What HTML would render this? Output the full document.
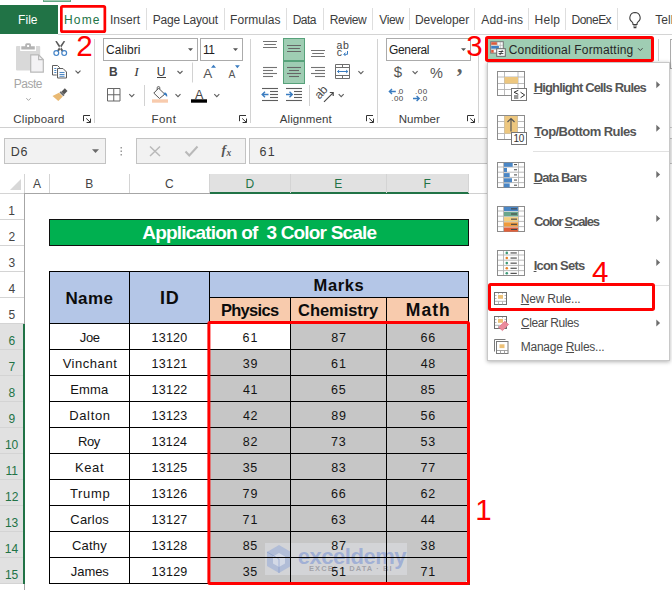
<!DOCTYPE html>
<html lang="en">
<head>
<meta charset="utf-8">
<title>Excel - Conditional Formatting - New Rule</title>
<style>
html,body{margin:0;padding:0;}
body{width:672px;height:590px;overflow:hidden;background:#fff;position:relative;
  font-family:"Liberation Sans",sans-serif;font-size:12px;color:#444;}
.a{position:absolute;display:block;}
.t{position:absolute;white-space:nowrap;line-height:1;}
svg{overflow:visible;}
</style>
</head>
<body>

<!-- ======= TAB ROW ======= -->
<div class="a" style="left:0px;top:0px;width:672px;height:35px;background:#ffffff;"></div>
<div class="a" style="left:43px;top:0px;width:28px;height:2px;background:#9fcdb3;border:1px solid #63a884;box-sizing:border-box;border-top:0;"></div>
<div class="a" style="left:0px;top:5px;width:58px;height:29px;background:#217346;"></div>
<div class="a" style="left:58px;top:34px;width:614px;height:1px;background:#d4d4d4;"></div>
<span class="t" style="left:18.02px;top:14px;font-size:12px;letter-spacing:0.060px;color:#ffffff;">File</span>
<span class="t" style="left:64.02px;top:14px;font-size:12px;letter-spacing:1.169px;color:#217346;">Home</span>
<span class="t" style="left:109.90px;top:14px;font-size:12px;letter-spacing:0.035px;color:#3c3c3c;">Insert</span>
<span class="t" style="left:152.72px;top:14px;font-size:12px;letter-spacing:-0.202px;color:#3c3c3c;">Page Layout</span>
<span class="t" style="left:230.02px;top:14px;font-size:12px;letter-spacing:0.057px;color:#3c3c3c;">Formulas</span>
<span class="t" style="left:292.72px;top:14px;font-size:12px;letter-spacing:-0.524px;color:#3c3c3c;">Data</span>
<span class="t" style="left:329.72px;top:14px;font-size:12px;letter-spacing:-0.480px;color:#3c3c3c;">Review</span>
<span class="t" style="left:379.25px;top:14px;font-size:12px;letter-spacing:-0.359px;color:#3c3c3c;">View</span>
<span class="t" style="left:415.02px;top:14px;font-size:12px;letter-spacing:-0.065px;color:#3c3c3c;">Developer</span>
<span class="t" style="left:481.28px;top:14px;font-size:12px;letter-spacing:0.194px;color:#3c3c3c;">Add-ins</span>
<span class="t" style="left:534.52px;top:14px;font-size:12px;letter-spacing:0.264px;color:#3c3c3c;">Help</span>
<span class="t" style="left:571.52px;top:14px;font-size:12px;letter-spacing:-0.518px;color:#3c3c3c;">DoneEx</span>
<span class="t" style="left:655.24px;top:14px;font-size:12px;letter-spacing:0.019px;color:#3c3c3c;">Tell</span>
<div class="a" style="left:146px;top:8px;width:1px;height:22px;background:#dedede;"></div>
<div class="a" style="left:224px;top:8px;width:1px;height:22px;background:#dedede;"></div>
<div class="a" style="left:286px;top:8px;width:1px;height:22px;background:#dedede;"></div>
<div class="a" style="left:323px;top:8px;width:1px;height:22px;background:#dedede;"></div>
<div class="a" style="left:372px;top:8px;width:1px;height:22px;background:#dedede;"></div>
<div class="a" style="left:409px;top:8px;width:1px;height:22px;background:#dedede;"></div>
<div class="a" style="left:474px;top:8px;width:1px;height:22px;background:#dedede;"></div>
<div class="a" style="left:528px;top:8px;width:1px;height:22px;background:#dedede;"></div>
<div class="a" style="left:565px;top:8px;width:1px;height:22px;background:#dedede;"></div>
<div class="a" style="left:617px;top:8px;width:1px;height:22px;background:#dedede;"></div>
<svg class="a" style="left:626px;top:10px;" width="18" height="20" viewBox="0 0 18 20"><path d="M9 2.5a5.2 5.2 0 0 0-3 9.4c.7.6 1 1.300 1 2.100v.5h4v-.5c0-.8.3-1.500 1-2.100a5.200 5.200 0 0 0-3-9.400z" fill="none" stroke="#3c3c3c" stroke-width="1.100"/><path d="M7.200 16h3.600M7.600 17.600h2.800" stroke="#3c3c3c" stroke-width="1.100" fill="none"/></svg>
<!-- ======= RIBBON BODY ======= -->
<div class="a" style="left:0px;top:35px;width:672px;height:93px;background:#ffffff;"></div>
<div class="a" style="left:0px;top:127px;width:672px;height:1px;background:#d0d0d0;"></div>
<div class="a" style="left:94px;top:39px;width:1px;height:84px;background:#d2d2d2;"></div>
<div class="a" style="left:250px;top:39px;width:1px;height:84px;background:#d2d2d2;"></div>
<div class="a" style="left:377px;top:39px;width:1px;height:84px;background:#d2d2d2;"></div>
<div class="a" style="left:478px;top:39px;width:1px;height:84px;background:#d2d2d2;"></div>
<span class="t" style="left:13.33px;top:114px;font-size:11.5px;letter-spacing:0.224px;color:#3c3c3c;">Clipboard</span>
<span class="t" style="left:151.56px;top:114px;font-size:11.5px;letter-spacing:0.437px;color:#3c3c3c;">Font</span>
<span class="t" style="left:279.68px;top:114px;font-size:11.5px;letter-spacing:0.120px;color:#3c3c3c;">Alignment</span>
<span class="t" style="left:398.76px;top:114px;font-size:11.5px;letter-spacing:0.044px;color:#3c3c3c;">Number</span>
<div class="a" style="left:103px;top:38px;width:95px;height:23px;background:#ffffff;border:1px solid #ababab;box-sizing:border-box;"></div>
<div class="a" style="left:200px;top:38px;width:43px;height:23px;background:#ffffff;border:1px solid #ababab;box-sizing:border-box;"></div>
<div class="a" style="left:386px;top:38px;width:85px;height:23px;background:#ffffff;border:1px solid #ababab;box-sizing:border-box;"></div>
<span class="t" style="left:106.10px;top:44px;font-size:12px;letter-spacing:0.066px;color:#1e1e1e;">Calibri</span>
<span class="t" style="left:202.89px;top:44px;font-size:12px;letter-spacing:-0.300px;color:#1e1e1e;">11</span>
<span class="t" style="left:389.10px;top:44px;font-size:12px;letter-spacing:-0.382px;color:#1e1e1e;">General</span>
<span class="t" style="left:13.82px;top:78px;font-size:12px;letter-spacing:-0.493px;color:#a6a6a6;">Paste</span>
<span class="t" style="left:109.11px;top:66px;font-size:12px;font-weight:bold;color:#444;">B</span>
<span class="t" style="left:134.25px;top:65px;font-size:13.5px;font-style:italic;font-family:'Liberation Serif',serif;color:#3a3a3a;">I</span>
<span class="t" style="left:156.78px;top:66px;font-size:12px;color:#333;">U</span>
<div class="a" style="left:157px;top:77px;width:9px;height:1px;background:#444;"></div>
<span class="t" style="left:203.27px;top:67px;font-size:13.5px;color:#555;">A</span>
<span class="t" style="left:228.48px;top:70px;font-size:10.3px;color:#555;">A</span>
<span class="t" style="left:194.88px;top:89px;font-size:12.5px;color:#444;">A</span>
<span class="t" style="left:393.65px;top:64px;font-size:15px;color:#555;">$</span>
<span class="t" style="left:429.99px;top:66px;font-size:14.5px;color:#555;">%</span>
<span class="t" style="left:456.70px;top:53px;font-size:23px;font-weight:bold;font-family:'Liberation Serif',serif;color:#606060;">,</span>
<span class="t" style="left:336.46px;top:40px;font-size:10.5px;letter-spacing:0.796px;color:#444;">ab</span>
<span class="t" style="left:336.76px;top:47px;font-size:10.5px;color:#444;">c</span>
<span class="t" style="left:397.57px;top:88px;font-size:8px;letter-spacing:-0.940px;color:#444;">.0</span>
<span class="t" style="left:391.27px;top:95px;font-size:8px;letter-spacing:0.456px;color:#444;">.00</span>
<span class="t" style="left:415.07px;top:88px;font-size:8px;letter-spacing:0.506px;color:#444;">.00</span>
<span class="t" style="left:420.17px;top:95px;font-size:8px;letter-spacing:0.360px;color:#444;">.0</span>
<span class="t" style="left:321px;top:88.5px;font-size:12px;color:#4a4a4a;transform:rotate(-47deg);transform-origin:0 100%;letter-spacing:-0.4px;">ab</span>
<div class="a" style="left:283px;top:38px;width:22px;height:23px;background:#9fcdb3;border:1px solid #57a27a;box-sizing:border-box;"></div>
<div class="a" style="left:283px;top:61px;width:22px;height:23px;background:#9fcdb3;border:1px solid #57a27a;box-sizing:border-box;"></div>
<div class="a" style="left:486px;top:37px;width:167px;height:24px;background:#9fcdb3;"></div>
<span class="t" style="left:508.70px;top:44px;font-size:12px;letter-spacing:0.183px;color:#262626;">Conditional Formatting</span>
<div class="a" style="left:658px;top:39px;width:1px;height:22px;background:#cfcfcf;"></div>
<div class="a" style="left:670px;top:39px;width:3px;height:30px;background:#fdfdfd;border:1px solid #ababab;box-sizing:border-box;"></div>
<svg class="a" style="left:0px;top:0px;" width="672" height="128" viewBox="0 0 672 128"><path d="M17 46h22.200a1 1 0 0 1 1 1v22.600a1 1 0 0 1-1 1h-22.200a1 1 0 0 1-1-1v-22.600a1 1 0 0 1 1-1z" fill="#d9d9d9"/><rect x="20.200" y="46" width="15.800" height="5" fill="#ffffff"/><path d="M21.300 46.300h3.900v-1.600a1.500 1.500 0 0 1 1.500-1.500h2.800a1.500 1.500 0 0 1 1.500 1.500v1.600h3.800v3.300h-13.500z" fill="#b4b4b4"/><rect x="27.100" y="45" width="2" height="2" fill="#ffffff"/><path d="M30.700 54.900h7.900l4.700 4.700v12.600h-12.600z" fill="#f3f2f4" stroke="#b9b9b9" stroke-width="1.200"/><path d="M38.600 54.900v4.700h4.700" fill="none" stroke="#b9b9b9" stroke-width="1.200"/><path d="M26.3 98.2l2.2 2.2l2.2 -2.2" fill="none" stroke="#a6a6a6" stroke-width="1"/><path d="M55.200 41.200l1.600-.3 6.600 9.600-1.600 1.200zM65.200 41.200l-1.600-.3-6.600 9.600 1.600 1.200z" fill="#5a5a5a"/><circle cx="56.300" cy="53.100" r="2.400" fill="none" stroke="#4484c8" stroke-width="1.200"/><circle cx="64.200" cy="53.100" r="2.400" fill="none" stroke="#4484c8" stroke-width="1.200"/><path d="M52.500 65.500h5l2 2v1.200M52.500 65.500v9.500h4.200" fill="none" stroke="#5e5e5e" stroke-width="1"/><path d="M57.500 68.500h5.500l3.500 3.500v6h-9z" fill="#fafafa" stroke="#5e5e5e" stroke-width="1"/><path d="M59.500 72.500h5M59.500 74.500h5M59.500 76.300h5M54.300 68.500h2M54.300 70.500h2M54.300 72.500h2" stroke="#3a7cc0" stroke-width="0.900"/><path d="M75.5 70.6l2.5 2.5l2.5 -2.5" fill="none" stroke="#5e5e5e" stroke-width="1.1"/><path d="M64.800 88.300l2.700 2.700-3.400 3.400-2.700-2.700z" fill="#555"/><path d="M60.800 91.200l3.800 3.800-1.300 1.300-3.800-3.800z" fill="#6b6b6b"/><path d="M59 92.800l3.800 3.800-4.500 4.300-5.800-5z" fill="#e9b973"/><path d="M83.5 121.2V115.5H90" fill="none" stroke="#333" stroke-width="1"/><path d="M86.2 118.4L90.3 122.3M90.5 118.6V122.5H86.6" fill="none" stroke="#333" stroke-width="1"/><path d="M239.5 121.2V115.5H246" fill="none" stroke="#333" stroke-width="1"/><path d="M242.2 118.4L246.3 122.3M246.5 118.6V122.5H242.6" fill="none" stroke="#333" stroke-width="1"/><path d="M366.5 121.2V115.5H373" fill="none" stroke="#333" stroke-width="1"/><path d="M369.2 118.4L373.3 122.3M373.5 118.6V122.5H369.6" fill="none" stroke="#333" stroke-width="1"/><path d="M467.5 121.2V115.5H474" fill="none" stroke="#333" stroke-width="1"/><path d="M470.2 118.4L474.3 122.3M474.5 118.6V122.5H470.6" fill="none" stroke="#333" stroke-width="1"/><path d="M188 48.3h5l-2.5 2.8z" fill="#555"/><path d="M233 48.3h5l-2.5 2.8z" fill="#555"/><path d="M461 48.3h5l-2.5 2.8z" fill="#555"/><path d="M177.5 71l2.5 2.5l2.5 -2.5" fill="none" stroke="#5e5e5e" stroke-width="1.1"/><path d="M192.500 62.500v20" stroke="#d2d2d2" stroke-width="1"/><path d="M211 67.800l2.500-3 2.500 3z" fill="#3a7cc0"/><path d="M235 65.300h4.800l-2.400 2.900z" fill="#3a7cc0"/><path d="M107.500 88.500h12.500v12.500h-12.500zM113.750 88.500v12.500M107.500 94.750h12.500" fill="none" stroke="#666" stroke-width="1"/><path d="M129.3 94.2l2.5 2.5l2.5 -2.5" fill="none" stroke="#5e5e5e" stroke-width="1.1"/><path d="M144.500 85v21" stroke="#d2d2d2" stroke-width="1"/><path d="M158.600 88.200l6.200 6-5.300 4.300-5.700-5.400z" fill="#fafafa" stroke="#555" stroke-width="1"/><path d="M157.200 90v-2.200a1.300 1.300 0 0 1 2.600 0v1.400" fill="none" stroke="#555" stroke-width="0.900"/><path d="M164.800 92.300c2 .6 2.900 2.300 2.300 4.800-1.200-1.700-2.100-2.300-3.800-2.600z" fill="#3a7cc0"/><rect x="152" y="99.300" width="16" height="3.400" fill="#f8cbad"/><path d="M175.5 94.2l2.5 2.5l2.5 -2.5" fill="none" stroke="#5e5e5e" stroke-width="1.1"/><rect x="191" y="99.300" width="16" height="3.400" fill="#000"/><path d="M214.3 94.2l2.5 2.5l2.5 -2.5" fill="none" stroke="#5e5e5e" stroke-width="1.1"/><path d="M263 41.5H277M264.2 44.5H275.9M263 47.5H277" stroke="#737373" stroke-width="1.1" fill="none"/><path d="M287 45.5H301M288.2 48.5H299.9M287 51.5H301" stroke="#666" stroke-width="1.1" fill="none"/><path d="M311 50.5H325M312.2 53.5H323.9M311 56.5H325" stroke="#737373" stroke-width="1.1" fill="none"/><path d="M263 67.5H277" stroke="#737373" stroke-width="1.1"/><path d="M263 70.5H273" stroke="#737373" stroke-width="1.1"/><path d="M263 73.5H277" stroke="#737373" stroke-width="1.1"/><path d="M263 76.5H273" stroke="#737373" stroke-width="1.1"/><path d="M287 67.5H301" stroke="#666" stroke-width="1.1"/><path d="M289 70.5H299" stroke="#666" stroke-width="1.1"/><path d="M287 73.5H301" stroke="#666" stroke-width="1.1"/><path d="M289 76.5H299" stroke="#666" stroke-width="1.1"/><path d="M311 67.5H325" stroke="#737373" stroke-width="1.1"/><path d="M315 70.5H325" stroke="#737373" stroke-width="1.1"/><path d="M311 73.5H325" stroke="#737373" stroke-width="1.1"/><path d="M315 76.5H325" stroke="#737373" stroke-width="1.1"/><path d="M347.500 51v3.300h-3.500M345.500 52.600l-1.700 1.700 1.700 1.700" fill="none" stroke="#3a7cc0" stroke-width="1"/><path d="M335.500 64.500h14v14h-14zM335.500 67.500h14M335.500 75.500h14M342.500 64.500v3M342.500 75.500v3" fill="none" stroke="#6e6e6e" stroke-width="1"/><path d="M337.500 71.500h10.300M339.200 70l-1.700 1.500 1.700 1.500M346.100 70l1.700 1.500-1.700 1.500" fill="none" stroke="#3a7cc0" stroke-width="1"/><path d="M358.4 71.2l2.5 2.5l2.5 -2.5" fill="none" stroke="#5e5e5e" stroke-width="1.1"/><path d="M262 88.5H278" stroke="#5e5e5e" stroke-width="1.1"/><path d="M262 100.5H278" stroke="#5e5e5e" stroke-width="1.1"/><path d="M270 91.5H278" stroke="#5e5e5e" stroke-width="1.1"/><path d="M270 94.5H278" stroke="#5e5e5e" stroke-width="1.1"/><path d="M270 97.5H278" stroke="#5e5e5e" stroke-width="1.1"/><path d="M262.300 94.500h6.200M265 91.800l-2.800 2.700 2.800 2.700" fill="none" stroke="#3a7cc0" stroke-width="1.400"/><path d="M286 88.5H302" stroke="#5e5e5e" stroke-width="1.1"/><path d="M286 100.5H302" stroke="#5e5e5e" stroke-width="1.1"/><path d="M294 91.5H302" stroke="#5e5e5e" stroke-width="1.1"/><path d="M294 94.5H302" stroke="#5e5e5e" stroke-width="1.1"/><path d="M294 97.5H302" stroke="#5e5e5e" stroke-width="1.1"/><path d="M286 94.500h6.200M289.500 91.800l2.800 2.700-2.800 2.700" fill="none" stroke="#3a7cc0" stroke-width="1.400"/><path d="M309.500 85v21" stroke="#d2d2d2" stroke-width="1"/><path d="M324 101.800l9-9M329.800 92.500h3.400v3.400" fill="none" stroke="#4a4a4a" stroke-width="1.200"/><path d="M338.7 94.2l2.5 2.5l2.5 -2.5" fill="none" stroke="#5e5e5e" stroke-width="1.1"/><path d="M412.6 71.2l2.5 2.5l2.5 -2.5" fill="none" stroke="#5e5e5e" stroke-width="1.1"/><path d="M389.500 91.500h6.300M392 89l-2.600 2.500 2.600 2.500" fill="none" stroke="#3a7cc0" stroke-width="1.400"/><path d="M413 98.500h6.300M416.600 96l2.600 2.500-2.600 2.500" fill="none" stroke="#3a7cc0" stroke-width="1.400"/><rect x="490.700" y="41.700" width="12.600" height="11.400" fill="#fbfbfb" stroke="#757575" stroke-width="1"/><path d="M491 45.300h12M491 49.300h12M497.300 42v11M500.300 42v11" stroke="#b5b5b5" stroke-width="0.700"/><rect x="491.200" y="42.200" width="5.700" height="2.600" fill="#dc5a3c"/><rect x="491.200" y="46" width="7.700" height="2.700" fill="#3f7fc4"/><rect x="491.200" y="50" width="2.500" height="2.700" fill="#dc5a3c"/><rect x="496.700" y="48.700" width="8.600" height="7.600" fill="#fff" stroke="#666" stroke-width="1"/><path d="M498.600 51.500h4.800M498.600 53.600h4.800M502.300 50.200l-2.400 4.800" stroke="#333" stroke-width="0.900" fill="none"/><path d="M638 48.2l2.3 2.3l2.3 -2.3" fill="none" stroke="#444" stroke-width="1"/></svg>
<!-- ======= FORMULA BAR ======= -->
<div class="a" style="left:0px;top:128px;width:672px;height:46px;background:#ffffff;"></div>
<div class="a" style="left:4px;top:138px;width:102px;height:26px;background:#f2f2f2;border:1px solid #c3c3c3;box-sizing:border-box;"></div>
<div class="a" style="left:136px;top:138px;width:110px;height:26px;background:#f2f2f2;border:1px solid #c3c3c3;box-sizing:border-box;"></div>
<div class="a" style="left:249px;top:138px;width:430px;height:26px;background:#f2f2f2;border:1px solid #c3c3c3;box-sizing:border-box;"></div>
<span class="t" style="left:10.78px;top:146px;font-size:12.5px;letter-spacing:0.787px;color:#3c3c3c;">D6</span>
<span class="t" style="left:259.38px;top:146px;font-size:12.5px;letter-spacing:1.325px;color:#3c3c3c;">61</span>
<span class="t" style="left:221.50px;top:143px;font-size:13.5px;font-weight:bold;font-style:italic;font-family:'Liberation Serif',serif;color:#555;">f</span>
<span class="t" style="left:226.42px;top:149px;font-size:9.5px;font-weight:bold;font-style:italic;font-family:'Liberation Serif',serif;color:#555;">x</span>
<svg class="a" style="left:0px;top:0px;" width="672" height="176" viewBox="0 0 672 176"><path d="M92 149.300h7l-3.500 3.700z" fill="#6a6a6a"/><path d="M120.500 147h1.500v1.500h-1.500zM120.500 150.500h1.500v1.500h-1.500zM120.500 154h1.500v1.500h-1.500z" fill="#9a9a9a"/><path d="M150 146.500l10 9.500M160 146.500l-10 9.500" stroke="#b9b9b9" stroke-width="1.500" fill="none"/><path d="M185.500 151.500l3.800 4 8.200-9" stroke="#b9b9b9" stroke-width="2" fill="none"/></svg>
<!-- ======= SHEET ======= -->
<div class="a" style="left:0px;top:174px;width:469px;height:19px;background:#ffffff;"></div>
<div class="a" style="left:210px;top:174px;width:259px;height:19px;background:#e1e1e1;"></div>
<div class="a" style="left:0px;top:193px;width:24px;height:1px;background:#d4d4d4;"></div>
<div class="a" style="left:24px;top:193px;width:445px;height:1px;background:#a6a6a6;"></div>
<div class="a" style="left:469px;top:193px;width:18px;height:1px;background:#d0d0d0;"></div>
<div class="a" style="left:210px;top:192px;width:259px;height:2px;background:#217346;"></div>
<div class="a" style="left:24px;top:174px;width:1px;height:19px;background:#d4d4d4;"></div>
<div class="a" style="left:49px;top:174px;width:1px;height:19px;background:#d4d4d4;"></div>
<div class="a" style="left:129px;top:174px;width:1px;height:19px;background:#d4d4d4;"></div>
<div class="a" style="left:209px;top:174px;width:1px;height:19px;background:#d4d4d4;"></div>
<div class="a" style="left:290px;top:174px;width:1px;height:19px;background:#d4d4d4;"></div>
<div class="a" style="left:386px;top:174px;width:1px;height:19px;background:#d4d4d4;"></div>
<div class="a" style="left:468px;top:174px;width:1px;height:19px;background:#d4d4d4;"></div>
<svg class="a" style="left:9px;top:178px" width="13" height="13"><path d="M12 1v11H1z" fill="#d8d8d8"/></svg>
<span class="t" style="left:33.00px;top:178px;font-size:12px;color:#444;">A</span>
<span class="t" style="left:85.32px;top:178px;font-size:12px;color:#444;">B</span>
<span class="t" style="left:165.09px;top:178px;font-size:12px;color:#444;">C</span>
<span class="t" style="left:245.46px;top:178px;font-size:12px;color:#217346;">D</span>
<span class="t" style="left:334.26px;top:178px;font-size:12px;color:#217346;">E</span>
<span class="t" style="left:423.58px;top:178px;font-size:12px;color:#217346;">F</span>
<div class="a" style="left:0px;top:194px;width:24px;height:396px;background:#ffffff;"></div>
<div class="a" style="left:0px;top:324px;width:24px;height:260px;background:#e1e1e1;"></div>
<div class="a" style="left:24px;top:193px;width:1px;height:397px;background:#a6a6a6;"></div>
<div class="a" style="left:23px;top:324px;width:2px;height:260px;background:#217346;"></div>
<div class="a" style="left:0px;top:219px;width:24px;height:1px;background:#d4d4d4;"></div>
<div class="a" style="left:0px;top:245px;width:24px;height:1px;background:#d4d4d4;"></div>
<div class="a" style="left:0px;top:271px;width:24px;height:1px;background:#d4d4d4;"></div>
<div class="a" style="left:0px;top:297px;width:24px;height:1px;background:#d4d4d4;"></div>
<div class="a" style="left:0px;top:323px;width:24px;height:1px;background:#d4d4d4;"></div>
<div class="a" style="left:0px;top:349px;width:23px;height:1px;background:#d4d4d4;"></div>
<div class="a" style="left:0px;top:375px;width:23px;height:1px;background:#d4d4d4;"></div>
<div class="a" style="left:0px;top:401px;width:23px;height:1px;background:#d4d4d4;"></div>
<div class="a" style="left:0px;top:427px;width:23px;height:1px;background:#d4d4d4;"></div>
<div class="a" style="left:0px;top:453px;width:23px;height:1px;background:#d4d4d4;"></div>
<div class="a" style="left:0px;top:479px;width:23px;height:1px;background:#d4d4d4;"></div>
<div class="a" style="left:0px;top:505px;width:23px;height:1px;background:#d4d4d4;"></div>
<div class="a" style="left:0px;top:531px;width:23px;height:1px;background:#d4d4d4;"></div>
<div class="a" style="left:0px;top:557px;width:23px;height:1px;background:#d4d4d4;"></div>
<div class="a" style="left:0px;top:583px;width:23px;height:1px;background:#d4d4d4;"></div>
<span class="t" style="left:8.30px;top:205px;font-size:12px;color:#444;">1</span>
<span class="t" style="left:8.46px;top:231px;font-size:12px;color:#444;">2</span>
<span class="t" style="left:8.49px;top:257px;font-size:12px;color:#444;">3</span>
<span class="t" style="left:8.51px;top:283px;font-size:12px;color:#444;">4</span>
<span class="t" style="left:8.47px;top:309px;font-size:12px;color:#444;">5</span>
<span class="t" style="left:8.42px;top:335px;font-size:12px;color:#217346;">6</span>
<span class="t" style="left:8.46px;top:361px;font-size:12px;color:#217346;">7</span>
<span class="t" style="left:8.46px;top:387px;font-size:12px;color:#217346;">8</span>
<span class="t" style="left:8.47px;top:413px;font-size:12px;color:#217346;">9</span>
<span class="t" style="left:4.90px;top:439px;font-size:12px;color:#217346;">10</span>
<span class="t" style="left:5.40px;top:465px;font-size:12px;color:#217346;">11</span>
<span class="t" style="left:4.97px;top:491px;font-size:12px;color:#217346;">12</span>
<span class="t" style="left:4.93px;top:517px;font-size:12px;color:#217346;">13</span>
<span class="t" style="left:4.85px;top:543px;font-size:12px;color:#217346;">14</span>
<span class="t" style="left:4.92px;top:569px;font-size:12px;color:#217346;">15</span>
<div class="a" style="left:49px;top:219px;width:420px;height:27px;background:#00b050;border:1px solid #101010;box-sizing:border-box;"></div>
<span class="t" style="left:142.34px;top:223px;font-size:19px;letter-spacing:-0.818px;font-weight:bold;color:#ffffff;white-space:pre;">Application of  3 Color Scale</span>
<div class="a" style="left:49px;top:271px;width:420px;height:52px;background:#b4c6e7;"></div>
<div class="a" style="left:210px;top:298px;width:259px;height:25px;background:#f8cbad;"></div>
<div class="a" style="left:210px;top:324px;width:259px;height:260px;background:#c6c6c6;"></div>
<div class="a" style="left:210px;top:324px;width:80px;height:25px;background:#ffffff;"></div>
<div class="a" style="left:265px;top:543px;width:142px;height:32px;background:rgba(222,224,230,0.55);"></div>
<svg class="a" style="left:265px;top:544px" width="28" height="30" viewBox="0 0 28 30"><path d="M14 1l12 7v14l-12 7-12-7V8z" fill="rgba(150,170,215,0.55)"/><path d="M14 9l6 3.500v7l-6 3.500-6-3.500v-7z" fill="rgba(215,220,232,0.9)"/><path d="M2 8l12 7v14" fill="none" stroke="rgba(120,145,200,0.5)" stroke-width="1"/></svg>
<span class="t" style="left:297.64px;top:546px;font-size:22px;letter-spacing:-0.445px;font-weight:bold;color:rgba(128,152,212,0.62);">exceldemy</span>
<span class="t" style="left:309.00px;top:565px;font-size:7.5px;letter-spacing:1.085px;font-weight:bold;color:rgba(120,120,130,0.55);">EXCEL · DATA · BI</span>
<div class="a" style="left:49px;top:271px;width:420px;height:1px;background:#000;"></div>
<div class="a" style="left:209px;top:297px;width:260px;height:1px;background:#000;"></div>
<div class="a" style="left:49px;top:323px;width:420px;height:1px;background:#000;"></div>
<div class="a" style="left:49px;top:349px;width:420px;height:1px;background:#000;"></div>
<div class="a" style="left:49px;top:375px;width:420px;height:1px;background:#000;"></div>
<div class="a" style="left:49px;top:401px;width:420px;height:1px;background:#000;"></div>
<div class="a" style="left:49px;top:427px;width:420px;height:1px;background:#000;"></div>
<div class="a" style="left:49px;top:453px;width:420px;height:1px;background:#000;"></div>
<div class="a" style="left:49px;top:479px;width:420px;height:1px;background:#000;"></div>
<div class="a" style="left:49px;top:505px;width:420px;height:1px;background:#000;"></div>
<div class="a" style="left:49px;top:531px;width:420px;height:1px;background:#000;"></div>
<div class="a" style="left:49px;top:557px;width:420px;height:1px;background:#000;"></div>
<div class="a" style="left:49px;top:583px;width:420px;height:1px;background:#000;"></div>
<div class="a" style="left:49px;top:271px;width:1px;height:313px;background:#000;"></div>
<div class="a" style="left:129px;top:271px;width:1px;height:313px;background:#000;"></div>
<div class="a" style="left:209px;top:271px;width:1px;height:313px;background:#000;"></div>
<div class="a" style="left:468px;top:271px;width:1px;height:313px;background:#000;"></div>
<div class="a" style="left:290px;top:297px;width:1px;height:287px;background:#000;"></div>
<div class="a" style="left:386px;top:297px;width:1px;height:287px;background:#000;"></div>
<span class="t" style="left:65.38px;top:290px;font-size:17px;letter-spacing:0.403px;font-weight:bold;color:#0c0c0c;">Name</span>
<span class="t" style="left:160.01px;top:289px;font-size:18px;letter-spacing:0.726px;font-weight:bold;color:#0c0c0c;">ID</span>
<span class="t" style="left:313.51px;top:277px;font-size:16.5px;letter-spacing:0.641px;font-weight:bold;color:#0c0c0c;">Marks</span>
<span class="t" style="left:220.91px;top:302px;font-size:16.5px;letter-spacing:-0.687px;font-weight:bold;color:#0c0c0c;">Physics</span>
<span class="t" style="left:298.02px;top:302px;font-size:16.5px;letter-spacing:-0.053px;font-weight:bold;color:#0c0c0c;">Chemistry</span>
<span class="t" style="left:405.85px;top:302px;font-size:17.5px;letter-spacing:1.004px;font-weight:bold;color:#0c0c0c;">Math</span>
<span class="t" style="left:79.76px;top:331px;font-size:13px;letter-spacing:-0.345px;color:#141414;">Joe</span>
<span class="t" style="left:151.55px;top:332px;font-size:12.5px;letter-spacing:0.216px;color:#141414;">13120</span>
<span class="t" style="left:242.62px;top:332px;font-size:12.5px;letter-spacing:0.825px;color:#141414;">61</span>
<span class="t" style="left:331.21px;top:332px;font-size:12.5px;letter-spacing:0.762px;color:#141414;">87</span>
<span class="t" style="left:420.43px;top:332px;font-size:12.5px;letter-spacing:0.763px;color:#141414;">66</span>
<span class="t" style="left:62.65px;top:357px;font-size:13px;letter-spacing:0.540px;color:#141414;">Vinchant</span>
<span class="t" style="left:151.55px;top:358px;font-size:12.5px;letter-spacing:0.247px;color:#141414;">13121</span>
<span class="t" style="left:242.78px;top:358px;font-size:12.5px;letter-spacing:0.662px;color:#141414;">39</span>
<span class="t" style="left:331.12px;top:358px;font-size:12.5px;letter-spacing:0.825px;color:#141414;">61</span>
<span class="t" style="left:420.78px;top:358px;font-size:12.5px;letter-spacing:0.413px;color:#141414;">48</span>
<span class="t" style="left:70.13px;top:383px;font-size:13px;letter-spacing:0.165px;color:#141414;">Emma</span>
<span class="t" style="left:151.55px;top:384px;font-size:12.5px;letter-spacing:0.253px;color:#141414;">13122</span>
<span class="t" style="left:242.97px;top:384px;font-size:12.5px;letter-spacing:0.475px;color:#141414;">41</span>
<span class="t" style="left:331.12px;top:384px;font-size:12.5px;letter-spacing:0.738px;color:#141414;">65</span>
<span class="t" style="left:420.51px;top:384px;font-size:12.5px;letter-spacing:0.650px;color:#141414;">85</span>
<span class="t" style="left:69.13px;top:409px;font-size:13px;letter-spacing:0.666px;color:#141414;">Dalton</span>
<span class="t" style="left:151.55px;top:410px;font-size:12.5px;letter-spacing:0.231px;color:#141414;">13123</span>
<span class="t" style="left:242.97px;top:410px;font-size:12.5px;letter-spacing:0.500px;color:#141414;">42</span>
<span class="t" style="left:331.21px;top:410px;font-size:12.5px;letter-spacing:0.725px;color:#141414;">89</span>
<span class="t" style="left:420.55px;top:410px;font-size:12.5px;letter-spacing:0.638px;color:#141414;">56</span>
<span class="t" style="left:77.98px;top:435px;font-size:13px;letter-spacing:-0.361px;color:#141414;">Roy</span>
<span class="t" style="left:151.55px;top:436px;font-size:12.5px;letter-spacing:0.188px;color:#141414;">13124</span>
<span class="t" style="left:242.71px;top:436px;font-size:12.5px;letter-spacing:0.762px;color:#141414;">82</span>
<span class="t" style="left:331.11px;top:436px;font-size:12.5px;letter-spacing:0.775px;color:#141414;">73</span>
<span class="t" style="left:420.55px;top:436px;font-size:12.5px;letter-spacing:0.638px;color:#141414;">53</span>
<span class="t" style="left:74.88px;top:461px;font-size:13px;letter-spacing:0.639px;color:#141414;">Keat</span>
<span class="t" style="left:151.55px;top:462px;font-size:12.5px;letter-spacing:0.225px;color:#141414;">13125</span>
<span class="t" style="left:242.78px;top:462px;font-size:12.5px;letter-spacing:0.588px;color:#141414;">35</span>
<span class="t" style="left:331.21px;top:462px;font-size:12.5px;letter-spacing:0.675px;color:#141414;">83</span>
<span class="t" style="left:420.41px;top:462px;font-size:12.5px;letter-spacing:0.862px;color:#141414;">77</span>
<span class="t" style="left:69.96px;top:487px;font-size:13px;letter-spacing:0.661px;color:#141414;">Trump</span>
<span class="t" style="left:151.55px;top:488px;font-size:12.5px;letter-spacing:0.231px;color:#141414;">13126</span>
<span class="t" style="left:242.61px;top:488px;font-size:12.5px;letter-spacing:0.825px;color:#141414;">79</span>
<span class="t" style="left:331.12px;top:488px;font-size:12.5px;letter-spacing:0.763px;color:#141414;">66</span>
<span class="t" style="left:420.43px;top:488px;font-size:12.5px;letter-spacing:0.850px;color:#141414;">62</span>
<span class="t" style="left:70.35px;top:513px;font-size:13px;letter-spacing:0.190px;color:#141414;">Carlos</span>
<span class="t" style="left:151.55px;top:514px;font-size:12.5px;letter-spacing:0.253px;color:#141414;">13127</span>
<span class="t" style="left:242.61px;top:514px;font-size:12.5px;letter-spacing:0.837px;color:#141414;">71</span>
<span class="t" style="left:331.12px;top:514px;font-size:12.5px;letter-spacing:0.763px;color:#141414;">63</span>
<span class="t" style="left:420.78px;top:514px;font-size:12.5px;letter-spacing:0.238px;color:#141414;">44</span>
<span class="t" style="left:72.05px;top:539px;font-size:13px;letter-spacing:0.180px;color:#141414;">Cathy</span>
<span class="t" style="left:151.55px;top:540px;font-size:12.5px;letter-spacing:0.231px;color:#141414;">13128</span>
<span class="t" style="left:242.71px;top:540px;font-size:12.5px;letter-spacing:0.650px;color:#141414;">85</span>
<span class="t" style="left:331.21px;top:540px;font-size:12.5px;letter-spacing:0.762px;color:#141414;">87</span>
<span class="t" style="left:420.57px;top:540px;font-size:12.5px;letter-spacing:0.613px;color:#141414;">38</span>
<span class="t" style="left:70.81px;top:565px;font-size:13px;letter-spacing:-0.056px;color:#141414;">James</span>
<span class="t" style="left:151.55px;top:566px;font-size:12.5px;letter-spacing:0.244px;color:#141414;">13129</span>
<span class="t" style="left:242.78px;top:566px;font-size:12.5px;letter-spacing:0.588px;color:#141414;">35</span>
<span class="t" style="left:331.25px;top:566px;font-size:12.5px;letter-spacing:0.700px;color:#141414;">51</span>
<span class="t" style="left:420.41px;top:566px;font-size:12.5px;letter-spacing:0.837px;color:#141414;">71</span>
<div class="a" style="left:466px;top:581px;width:5px;height:5px;background:#217346;border:1px solid #fff;box-sizing:border-box;"></div>
<!-- ======= CONDITIONAL FORMATTING MENU ======= -->
<div class="a" style="left:487px;top:62px;width:183px;height:299px;background:#ffffff;border:1px solid #c8c8c8;box-sizing:border-box;box-shadow:0 1px 4px rgba(0,0,0,0.30);"></div>
<div class="a" style="left:533px;top:151px;width:136px;height:1px;background:#e1e1e1;"></div>
<div class="a" style="left:488px;top:285px;width:181px;height:1px;background:#e1e1e1;"></div>
<span class="t" style="left:533.64px;top:81px;font-size:13px;letter-spacing:-0.842px;font-weight:bold;color:#555555;"><u>H</u>ighlight Cells Rules</span>
<span class="t" style="left:534.36px;top:125px;font-size:13px;letter-spacing:-0.567px;font-weight:bold;color:#555555;"><u>T</u>op/Bottom Rules</span>
<span class="t" style="left:533.64px;top:171px;font-size:13px;letter-spacing:-0.877px;font-weight:bold;color:#555555;"><u>D</u>ata Bars</span>
<span class="t" style="left:533.97px;top:215px;font-size:13px;letter-spacing:-1.155px;font-weight:bold;color:#555555;">Color <u>S</u>cales</span>
<span class="t" style="left:533.64px;top:259px;font-size:13px;letter-spacing:-0.777px;font-weight:bold;color:#555555;"><u>I</u>con Sets</span>
<span class="t" style="left:520.72px;top:293px;font-size:12px;letter-spacing:-0.215px;color:#4a4a4a;"><u>N</u>ew Rule...</span>
<span class="t" style="left:521.10px;top:317px;font-size:12px;letter-spacing:-0.466px;color:#4a4a4a;"><u>C</u>lear Rules</span>
<span class="t" style="left:520.72px;top:341px;font-size:12px;letter-spacing:-0.251px;color:#4a4a4a;">Manage <u>R</u>ules...</span>
<svg class="a" style="left:0px;top:0px;" width="672" height="590" viewBox="0 0 672 590"><rect x="497.5" y="71.5" width="27" height="24" fill="#fff" stroke="#8c8c8c" stroke-width="1"/><path d="M504.5 72V95M518 72V95M498 77H524M498 83.5H524M498 89.5H524" stroke="#b3b3b3" stroke-width="0.900" fill="none"/><rect x="504.500" y="77" width="13.500" height="6.500" fill="#edc77f"/><rect x="511.500" y="88.500" width="15" height="12" fill="#fff" stroke="#777" stroke-width="1"/><path d="M518.300 90.300l-4.300 2 4.300 2M514 96h4.300M514 98h4.300M520.500 92.200l4.200 2.800-4.200 2.800" fill="none" stroke="#333" stroke-width="1"/><path d="M656.3 81.2l3.800 3.500-3.800 3.500z" fill="#6e6e6e"/><rect x="497.5" y="115.5" width="27" height="24" fill="#fff" stroke="#8c8c8c" stroke-width="1"/><path d="M504.5 116V139M517.5 116V139M498 121.5H524M498 127.5H524M498 133.5H524" stroke="#b3b3b3" stroke-width="0.900" fill="none"/><rect x="504.500" y="116" width="13" height="17.500" fill="#edc77f"/><path d="M511 131.500v-13M507.500 122l3.500-3.500 3.500 3.500" fill="none" stroke="#555" stroke-width="1.200"/><rect x="511.500" y="132.500" width="15" height="12" fill="#fff" stroke="#777" stroke-width="1"/><path d="M656.3 124.80000000000001l3.800 3.500-3.800 3.500z" fill="#6e6e6e"/><rect x="497.5" y="162.5" width="27" height="25" fill="#fff" stroke="#8c8c8c" stroke-width="1"/><path d="M503.5 163V187M518.5 163V187M498 167H524M498 172.2H524M498 177.4H524M498 182.6H524" stroke="#b3b3b3" stroke-width="0.900" fill="none"/><rect x="504" y="162.80" width="8.7" height="4" fill="#4a86c5"/><rect x="514" y="164.10" width="3" height="1" fill="#444"/><rect x="504" y="167.95" width="3" height="4" fill="#4a86c5"/><rect x="514" y="169.25" width="3" height="1" fill="#444"/><rect x="504" y="173.10" width="5.7" height="4" fill="#4a86c5"/><rect x="514" y="174.40" width="3" height="1" fill="#444"/><rect x="504" y="178.25" width="8" height="4" fill="#4a86c5"/><rect x="514" y="179.55" width="3" height="1" fill="#444"/><rect x="504" y="183.40" width="5.7" height="4" fill="#4a86c5"/><rect x="514" y="184.70" width="3" height="1" fill="#444"/><path d="M656.3 171.0l3.800 3.500-3.800 3.500z" fill="#6e6e6e"/><rect x="497.5" y="206.5" width="27" height="25" fill="#fff" stroke="#8c8c8c" stroke-width="1"/><path d="M503.5 207V231M518.5 207V231M498 211H524M498 216.2H524M498 221.4H524M498 226.6H524" stroke="#b3b3b3" stroke-width="0.900" fill="none"/><rect x="504" y="206.80" width="14" height="4.300" fill="#4a86c5"/><rect x="511" y="208.30" width="6" height="1.100" fill="#444"/><rect x="504" y="211.95" width="14" height="4.300" fill="#6aa68b"/><rect x="511" y="213.45" width="6" height="1.100" fill="#444"/><rect x="504" y="217.10" width="14" height="4.300" fill="#f3cf80"/><rect x="511" y="218.60" width="6" height="1.100" fill="#444"/><rect x="504" y="222.25" width="14" height="4.300" fill="#ee9a3c"/><rect x="511" y="223.75" width="6" height="1.100" fill="#444"/><rect x="504" y="227.40" width="14" height="4.300" fill="#e0613b"/><rect x="511" y="228.90" width="6" height="1.100" fill="#444"/><path d="M656.3 215.0l3.800 3.500-3.800 3.500z" fill="#6e6e6e"/><rect x="497.5" y="250.5" width="27" height="25" fill="#fff" stroke="#8c8c8c" stroke-width="1"/><path d="M503.5 251V275M518.5 251V275M498 255H524M498 260.2H524M498 265.4H524M498 270.6H524" stroke="#b3b3b3" stroke-width="0.900" fill="none"/><circle cx="506.800" cy="252.90" r="1.300" fill="#3f9a78"/><rect x="510.500" y="252.40" width="6.300" height="1.100" fill="#444"/><circle cx="506.800" cy="258.00" r="1.300" fill="#e8832a"/><rect x="510.500" y="257.50" width="6.300" height="1.100" fill="#444"/><circle cx="506.800" cy="263.10" r="1.300" fill="#3f9a78"/><rect x="510.500" y="262.60" width="6.300" height="1.100" fill="#444"/><circle cx="506.800" cy="268.20" r="1.300" fill="#e8832a"/><rect x="510.500" y="267.70" width="6.300" height="1.100" fill="#444"/><circle cx="506.800" cy="273.30" r="1.300" fill="#3f9a78"/><rect x="510.500" y="272.80" width="6.300" height="1.100" fill="#444"/><path d="M656.3 259.0l3.800 3.500-3.800 3.500z" fill="#6e6e6e"/><rect x="494.5" y="292.5" width="12" height="12" fill="#fff" stroke="#6e6e6e" stroke-width="1"/><path d="M495 301.3h11M498.5 301.3v3M502.5 301.3v3M495 295.5h1.500M495 298.5h1.500M504.5 295.5h1.500M504.5 298.5h1.500M498.5 293v1.200M502.5 293v1.200" stroke="#b0b0b0" stroke-width="0.900" fill="none"/><rect x="498" y="295" width="5" height="3.800" fill="#edc177"/><rect x="494.5" y="316.5" width="12" height="12" fill="#fff" stroke="#6e6e6e" stroke-width="1"/><path d="M495 325.3h11M498.5 325.3v3M502.5 325.3v3M495 319.5h1.500M495 322.5h1.500M504.5 319.5h1.500M504.5 322.5h1.500M498.5 317v1.200M502.5 317v1.200" stroke="#b0b0b0" stroke-width="0.900" fill="none"/><rect x="498" y="319" width="5" height="3.800" fill="#edc177"/><path d="M504.800 321.300l3.800 3.200-6.100 6.100-3.800-3.200z" fill="#ea8b9b" stroke="#de6d82" stroke-width="0.700"/><path d="M656.3 319.5l3.800 3.500-3.800 3.500z" fill="#6e6e6e"/><path d="M494.500 351.500v-12h11" fill="none" stroke="#7a7a7a" stroke-width="1"/><rect x="496.500" y="341.500" width="11.500" height="12" fill="#fff" stroke="#7a7a7a" stroke-width="1"/><path d="M497 350.500h11M500.500 350.500v3M504.500 350.500v3" stroke="#9a9a9a" stroke-width="0.900" fill="none"/><rect x="499.500" y="344.300" width="5" height="3.800" fill="#edc177"/></svg>
<span class="t" style="left:513.54px;top:134px;font-size:10px;letter-spacing:-0.300px;color:#333;">10</span>
<!-- ======= RED ANNOTATIONS ======= -->
<svg class="a" style="left:0;top:0" width="672" height="590"><rect x="61.35" y="6.35" width="43.50" height="25.30" rx="1.2" fill="none" stroke="#ff0000" stroke-width="2.7"/></svg>
<svg class="a" style="left:0;top:0" width="672" height="590"><rect x="486.50" y="37.50" width="166.00" height="23.00" rx="1.2" fill="none" stroke="#ff0000" stroke-width="3"/></svg>
<svg class="a" style="left:0;top:0" width="672" height="590"><rect x="489.50" y="284.50" width="164.00" height="25.00" rx="1.2" fill="none" stroke="#ff0000" stroke-width="3"/></svg>
<svg class="a" style="left:0;top:0" width="672" height="590"><rect x="208.90" y="322.50" width="259.60" height="261.00" rx="1" fill="none" stroke="#ff0000" stroke-width="3"/></svg>
<span class="t" style="left:76.33px;top:31px;font-size:29.5px;color:#ff0000;">2</span>
<span class="t" style="left:466.18px;top:31px;font-size:29.5px;color:#ff0000;">3</span>
<span class="t" style="left:592.05px;top:257px;font-size:29.5px;color:#ff0000;">4</span>
<span class="t" style="left:475.36px;top:495px;font-size:29.5px;color:#ff0000;">1</span>

</body>
</html>
